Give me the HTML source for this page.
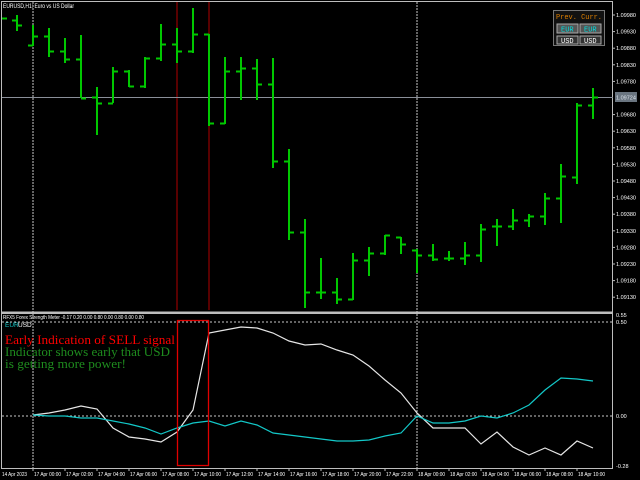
<!DOCTYPE html>
<html><head><style>
html,body{margin:0;padding:0;background:#000;width:640px;height:480px;overflow:hidden}
svg{display:block;font-family:"Liberation Sans",sans-serif}
.m{font-family:"Liberation Mono",monospace}
.s{font-family:"Liberation Serif",serif}
</style></head><body>
<svg width="640" height="480" viewBox="0 0 640 480" xmlns="http://www.w3.org/2000/svg">
<rect width="640" height="480" fill="#000"/>
<rect x="1.5" y="1.5" width="611" height="467" fill="none" stroke="#bdbdbd" stroke-width="1"/>
<rect x="1" y="311.5" width="612" height="2.5" fill="#bdbdbd"/>
<line x1="33" y1="2" x2="33" y2="468" stroke="#c8c8c8" stroke-dasharray="2,1"/>
<line x1="417" y1="2" x2="417" y2="468" stroke="#c8c8c8" stroke-dasharray="2,1"/>
<line x1="177" y1="2" x2="177" y2="310" stroke="#b00000"/>
<line x1="209" y1="2" x2="209" y2="310" stroke="#b00000"/>
<line x1="2" y1="97.5" x2="613" y2="97.5" stroke="#8a8f99"/>
<g stroke="#00c800" stroke-width="2" fill="none" id="bars"></g>
<line x1="2" y1="322" x2="613" y2="322" stroke="#c8c8c8" stroke-dasharray="2,2"/>
<line x1="2" y1="416" x2="613" y2="416" stroke="#c8c8c8" stroke-dasharray="2,2"/>
<polyline fill="none" stroke="#e6e6e6" stroke-width="1.2" points="33,415 49,413 65,410 81,406 97,409 113,428 129,437 145,439 161,442 177,432 193,410 209,333 225,330 241,327 257,328 273,333 289,341 305,345 321,344 337,350 353,355 369,366 385,380 401,393 417,413 433,428 449,428 465,428 481,444 497,432 513,447 529,455 545,448 561,455 577,441 593,448"/>
<polyline fill="none" stroke="#13c8c8" stroke-width="1.2" points="33,415 49,416 65,416 81,418 97,418 113,421 129,424 145,428 161,434 177,428 193,423 209,421 225,426 241,421 257,425 273,433 289,435 305,437 321,439 337,441 353,441 369,440 385,436 401,433 417,416 433,423 449,423 465,421 481,416 497,418 513,413 529,405 545,390 561,378 577,379 593,381"/>
<g stroke="#e00000" stroke-width="1.3">
<line x1="177.5" y1="320" x2="177.5" y2="466"/>
<line x1="208.5" y1="320" x2="208.5" y2="466"/>
<line x1="177" y1="320.5" x2="209" y2="320.5"/>
<line x1="177" y1="465.5" x2="209" y2="465.5"/>
</g>
<text x="3" y="8" font-size="6" fill="#fff" textLength="71" lengthAdjust="spacingAndGlyphs">EURUSD,H1: Euro vs US Dollar</text>
<text x="3" y="319" font-size="5.5" fill="#fff" textLength="141" lengthAdjust="spacingAndGlyphs">RFX5 Forex Strength Meter -0.17 0.20 0.00 0.80 0.00 0.80 0.00 0.80</text>
<text x="5" y="327" font-size="6.5" fill="#13c8c8">EUR</text><text x="18" y="327" font-size="6.5" fill="#fff">USD</text>
<text class="s" x="5" y="344" font-size="13" fill="#ff0000" textLength="170" lengthAdjust="spacingAndGlyphs">Early Indication of SELL signal</text>
<text class="s" x="5" y="356" font-size="13" fill="#1e8c1e" textLength="165" lengthAdjust="spacingAndGlyphs">Indicator shows early that USD</text>
<text class="s" x="5" y="368" font-size="13" fill="#1e8c1e" textLength="121" lengthAdjust="spacingAndGlyphs">is getting more power!</text>
<rect x="553.5" y="10.5" width="51" height="35" fill="#111" stroke="#777"/>
<text class="m" x="556" y="19" font-size="7" fill="#e08000" textLength="46" lengthAdjust="spacingAndGlyphs">Prev. Curr.</text>
<rect x="557" y="24" width="21" height="9" fill="#555" stroke="#aaa"/>
<rect x="580" y="24" width="21" height="9" fill="#555" stroke="#aaa"/>
<text class="m" x="561" y="31.5" font-size="7" fill="#00e0e0">EUR</text>
<text class="m" x="584" y="31.5" font-size="7" fill="#00e0e0">EUR</text>
<rect x="557" y="36" width="21" height="8" fill="#333" stroke="#aaa"/>
<rect x="580" y="36" width="21" height="8" fill="#333" stroke="#aaa"/>
<text class="m" x="561" y="43" font-size="7" fill="#fff">USD</text>
<text class="m" x="584" y="43" font-size="7" fill="#fff">USD</text>
<g font-size="5.5" fill="#fff" id="paxis"></g>
<rect x="615" y="92" width="22" height="10" fill="#6a7580"/>
<text x="616" y="99.5" font-size="5.5" fill="#dfe6ee">1.09724</text>
<text x="616" y="317" font-size="5.5" fill="#fff">0.55</text>
<text x="616" y="324" font-size="5.5" fill="#fff">0.50</text>
<text x="616" y="418" font-size="5.5" fill="#fff">0.00</text>
<text x="616" y="468" font-size="5.5" fill="#fff">-0.28</text>
<g font-size="5.5" fill="#fff" id="taxis"></g>
</svg>
<script>
var NS="http://www.w3.org/2000/svg";
var B=[[17,15,31,20,25],[33,25,46,45,36],[49,28,57,36,51],[65,38,63,51,59],[81,35,98,59,98],[97,87,135,97,103],[113,67,103,103,71],[129,70,87,71,86],[145,57,88,86,58],[161,24,61,58,44],[177,28,63,44,51],[193,8,53,51,34],[209,34,126,34,123],[225,57,124,123,71],[241,57,100,71,68],[257,59,100,68,84],[273,58,168,84,161],[289,149,240,161,232],[305,219,308,232,292],[321,258,299,292,292],[337,278,304,292,299],[353,253,300,299,260],[369,247,276,260,253],[385,235,255,253,235],[401,237,254,237,244],[417,249,273,250,255],[433,244,261,255,259],[449,251,261,258,258],[465,242,265,258,255],[481,224,262,255,229],[497,219,246,226,226],[513,209,230,226,220],[529,214,227,220,216],[545,193,225,216,198],[561,164,223,198,176],[577,103,184,177,105],[593,88,119,105,97]];
var g=document.getElementById("bars");
function ln(a,b,c,d){var l=document.createElementNS(NS,"line");l.setAttribute("x1",a);l.setAttribute("y1",b);l.setAttribute("x2",c);l.setAttribute("y2",d);g.appendChild(l);}
ln(2,18.5,7,18.5);
B.forEach(function(b){ln(b[0],b[1],b[0],b[2]);ln(b[0]-5,b[3]+.5,b[0],b[3]+.5);ln(b[0],b[4]+.5,b[0]+5,b[4]+.5);});
var p=document.getElementById("paxis");
function tx(par,x,y,s,w){var t=document.createElementNS(NS,"text");t.setAttribute("x",x);t.setAttribute("y",y);if(w){t.setAttribute("textLength",w);t.setAttribute("lengthAdjust","spacingAndGlyphs");}t.textContent=s;par.appendChild(t);}
for(var i=0;i<18;i++){var y=15+i*16.6;if(i==5)continue;var v=(1.09980-i*0.0005).toFixed(5);tx(p,616,y+2,v,20);var l=document.createElementNS(NS,"line");l.setAttribute("x1",612);l.setAttribute("x2",615);l.setAttribute("y1",y);l.setAttribute("y2",y);l.setAttribute("stroke","#bbb");p.appendChild(l);}
var ta=document.getElementById("taxis");
tx(ta,2,476,"14 Apr 2023",25);
var lab=["17 Apr 00:00","17 Apr 02:00","17 Apr 04:00","17 Apr 06:00","17 Apr 08:00","17 Apr 10:00","17 Apr 12:00","17 Apr 14:00","17 Apr 16:00","17 Apr 18:00","17 Apr 20:00","17 Apr 22:00","18 Apr 00:00","18 Apr 02:00","18 Apr 04:00","18 Apr 06:00","18 Apr 08:00","18 Apr 10:00"];
lab.forEach(function(s,i){tx(ta,34+i*32,476,s,27);var l=document.createElementNS(NS,"line");l.setAttribute("x1",33+i*32);l.setAttribute("x2",33+i*32);l.setAttribute("y1",468);l.setAttribute("y2",471);l.setAttribute("stroke","#bbb");ta.appendChild(l);});
</script>
</body></html>
